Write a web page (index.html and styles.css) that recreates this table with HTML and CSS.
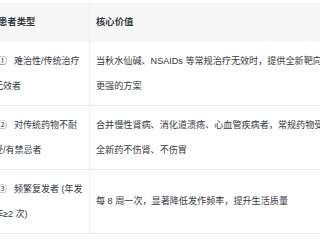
FILE: index.html
```html
<!DOCTYPE html>
<html lang="zh-CN">
<head>
<meta charset="utf-8">
<link rel="stylesheet" href="styles.css">
</head>
<body>
<table class="grid">
  <thead>
    <tr><th class="c1">患者类型</th><th class="c2">核心价值</th></tr>
  </thead>
  <tbody>
    <tr><td class="c1"><span class="num">①</span>难治性/传统治疗<br>无效者</td><td class="c2">当秋水仙碱、NSAIDs 等常规治疗无效时，提供全新靶向、<br>更强的方案</td></tr>
    <tr><td class="c1"><span class="num">②</span>对传统药物不耐<br>受/有禁忌者</td><td class="c2">合并慢性肾病、消化道溃疡、心血管疾病者，常规药物受限，<br>全新药不伤肾、不伤胃</td></tr>
    <tr><td class="c1"><span class="num">③</span>频繁复发者 (年发<br>作≥2 次)</td><td class="c2">每 8 周一次，显著降低发作频率，提升生活质量</td></tr>
  </tbody>
</table>
</body>
</html>
```
FILE: styles.css
```css
html, body {
  margin: 0;
  background: #ffffff;
}
body {
  font-family: "Liberation Sans", "Noto Sans CJK SC", sans-serif;
  font-size: 9.33px;
  color: #333840;
  overflow: hidden;
  width: 320px;
  height: 240px;
}
.grid {
  border-collapse: collapse;
  margin-top: 3px;
  margin-left: -12px;
  table-layout: fixed;
  width: 380px;
}
.grid th, .grid td {
  padding: 7px 6px;
  line-height: 24.5px;
  text-align: left;
  vertical-align: middle;
  border-bottom: 1px solid #e8e9ec;
  white-space: nowrap;
  overflow: hidden;
}
.grid th {
  line-height: 25px;
  background: #f7f7f8;
  font-weight: 600;
  border-bottom: none;
}
.grid th.c1 {
  padding-left: 10px;
}
.grid td.c1 {
  font-size: 9px;
}
.grid td.c2 {
  font-size: 9.1px;
}
.grid .c1 {
  width: 85px;
  border-right: 1px solid #eceef1;
}
.grid .c2 {
  width: 270px;
}
.num {
  margin-left: 4px;
  margin-right: 7px;
}
```
